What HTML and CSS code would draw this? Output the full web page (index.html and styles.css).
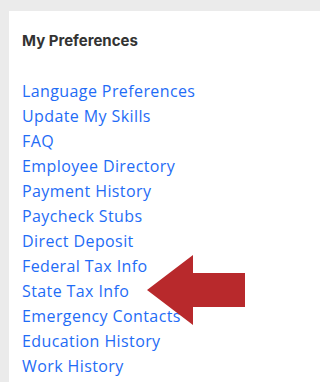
FILE: index.html
```html
<!DOCTYPE html>
<html>
<head>
<meta charset="utf-8">
<link rel="stylesheet" href="styles.css">
</head>
<body>
<div class="page">
  <div class="card">
    <h2 class="title">My Preferences</h2>
    <ul class="links">
      <li><a href="#">Language Preferences</a></li>
      <li><a href="#">Update My Skills</a></li>
      <li><a href="#">FAQ</a></li>
      <li><a href="#">Employee Directory</a></li>
      <li><a href="#">Payment History</a></li>
      <li><a href="#">Paycheck Stubs</a></li>
      <li><a href="#">Direct Deposit</a></li>
      <li><a href="#">Federal Tax Info</a></li>
      <li><a href="#">State Tax Info</a></li>
      <li><a href="#">Emergency Contacts</a></li>
      <li><a href="#">Education History</a></li>
      <li><a href="#">Work History</a></li>
    </ul>
  </div>
  <svg class="arrow" width="253" height="382" viewBox="0 0 253 382">
    <polygon points="147,290 193,255 193,273 245,273 245,307 193,307 193,325" fill="#b8292c"/>
  </svg>
</div>
</body>
</html>
```
FILE: styles.css
```css
html, body {
  margin: 0;
  padding: 0;
  background: #ebebeb;
  height: 100%;
  overflow: hidden;
}
.page {
  position: relative;
  padding: 11px 0 0 9px;
  height: 100%;
  box-sizing: border-box;
}
.card {
  background: #fff;
  height: 100%;
  padding: 21px 0 0 13px;
  box-sizing: border-box;
}
.title {
  margin: 0;
  font-family: Inter, sans-serif;
  font-weight: 700;
  font-size: 15px;
  line-height: 18px;
  color: #333;
}
.links {
  list-style: none;
  margin: 29px 0 0 0;
  padding: 0;
  font-family: "Open Sans", sans-serif;
  font-size: 16px;
  letter-spacing: 0.4px;
  line-height: 25px;
}
.links a {
  color: #1f6cf6;
  text-decoration: none;
  white-space: nowrap;
}
.arrow {
  position: absolute;
  left: 0;
  top: 0;
}
```
